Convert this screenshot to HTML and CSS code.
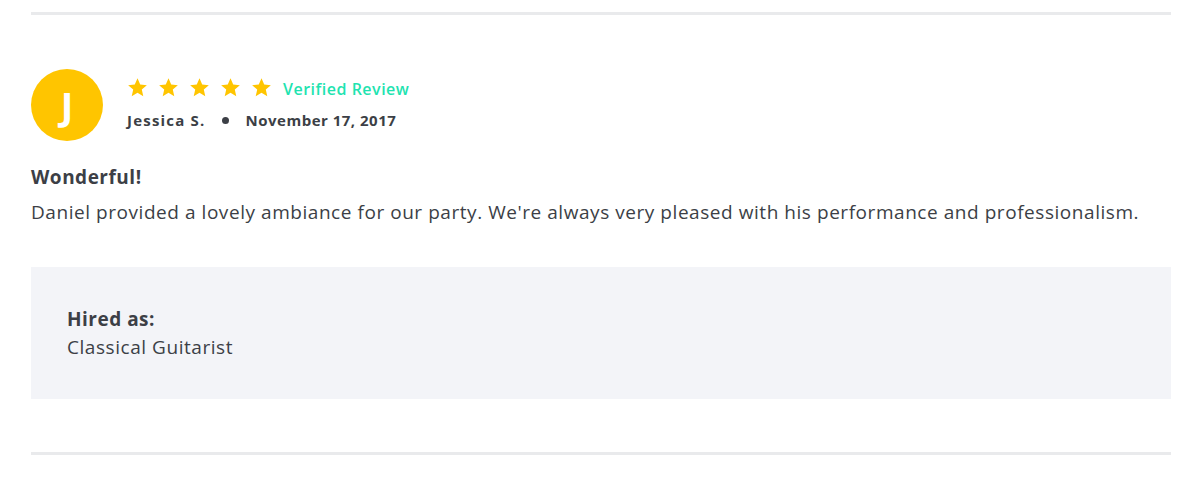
FILE: index.html
```html
<!DOCTYPE html>
<html>
<head>
<meta charset="utf-8">
<link rel="stylesheet" href="styles.css">
</head>
<body>
<div class="review">
  <div class="head">
    <div class="avatar">J</div>
    <div class="meta">
      <div class="rating">
        <span class="stars">
          <svg class="star" viewBox="0 0 24 24"><path d="M12 1.5l3.1 7.1 7.6.7-5.8 5.1 1.7 7.6L12 18l-6.6 4 1.7-7.6-5.8-5.1 7.6-.7z"/></svg>
          <svg class="star" viewBox="0 0 24 24"><path d="M12 1.5l3.1 7.1 7.6.7-5.8 5.1 1.7 7.6L12 18l-6.6 4 1.7-7.6-5.8-5.1 7.6-.7z"/></svg>
          <svg class="star" viewBox="0 0 24 24"><path d="M12 1.5l3.1 7.1 7.6.7-5.8 5.1 1.7 7.6L12 18l-6.6 4 1.7-7.6-5.8-5.1 7.6-.7z"/></svg>
          <svg class="star" viewBox="0 0 24 24"><path d="M12 1.5l3.1 7.1 7.6.7-5.8 5.1 1.7 7.6L12 18l-6.6 4 1.7-7.6-5.8-5.1 7.6-.7z"/></svg>
          <svg class="star" viewBox="0 0 24 24"><path d="M12 1.5l3.1 7.1 7.6.7-5.8 5.1 1.7 7.6L12 18l-6.6 4 1.7-7.6-5.8-5.1 7.6-.7z"/></svg>
        </span>
        <span class="verified">Verified Review</span>
      </div>
      <div class="byline">
        <span class="name">Jessica S.</span>
        <span class="dot"></span>
        <span class="date">November 17, 2017</span>
      </div>
    </div>
  </div>
  <h3 class="title">Wonderful!</h3>
  <p class="body">Daniel provided a lovely ambiance for our party. We're always very pleased with his performance and professionalism.</p>
  <div class="hired">
    <div class="hired-label">Hired as:</div>
    <div class="hired-value">Classical Guitarist</div>
  </div>
</div>
</body>
</html>
```
FILE: styles.css
```css
* { box-sizing: border-box; }
body {
  margin: 0;
  background: #fff;
  font-family: "Open Sans", "Noto Sans", sans-serif;
  color: #3c3f46;
}
.review {
  margin: 12px 22px 0 31px;
  border-top: 3px solid #e9eaec;
  border-bottom: 3px solid #e9eaec;
  padding: 54px 0 53px;
}
.head {
  display: flex;
  align-items: flex-start;
  gap: 24px;
}
.avatar {
  width: 72px;
  height: 72px;
  border-radius: 50%;
  background: #ffc500;
  color: #fff;
  font-size: 38px;
  font-weight: 700;
  display: flex;
  align-items: center;
  justify-content: center;
  flex: none;
}
.meta {
  padding-top: 8px;
}
.rating {
  display: flex;
  align-items: center;
  height: 21px;
}
.stars {
  display: flex;
  gap: 10px;
}
.star {
  width: 21px;
  height: 21px;
  fill: #ffc500;
  display: block;
}
.verified {
  margin-left: 11px;
  color: #1ee3b0;
  font-size: 16px;
  font-weight: 600;
  letter-spacing: 0.5px;
  position: relative;
  top: 1px;
}
.byline {
  display: flex;
  align-items: center;
  margin-top: 12px;
  font-size: 15px;
  font-weight: 700;
  letter-spacing: 0.5px;
}
.name {
  letter-spacing: 1.2px;
}
.dot {
  width: 7px;
  height: 7px;
  border-radius: 50%;
  background: #3c3f46;
  margin: 0 17px 0 16px;
}
.title {
  margin: 24px 0 0;
  font-size: 19px;
  font-weight: 700;
  line-height: 24px;
  letter-spacing: 0.5px;
}
.body {
  margin: 10px 0 0;
  font-size: 19px;
  line-height: 26px;
  letter-spacing: 0.55px;
}
.hired {
  margin-top: 42px;
  background: #f3f4f8;
  padding: 38px 36px 38px;
  font-size: 19px;
  line-height: 28px;
  letter-spacing: 0.55px;
}
.hired-label {
  font-weight: 700;
  letter-spacing: 0.5px;
}
```
